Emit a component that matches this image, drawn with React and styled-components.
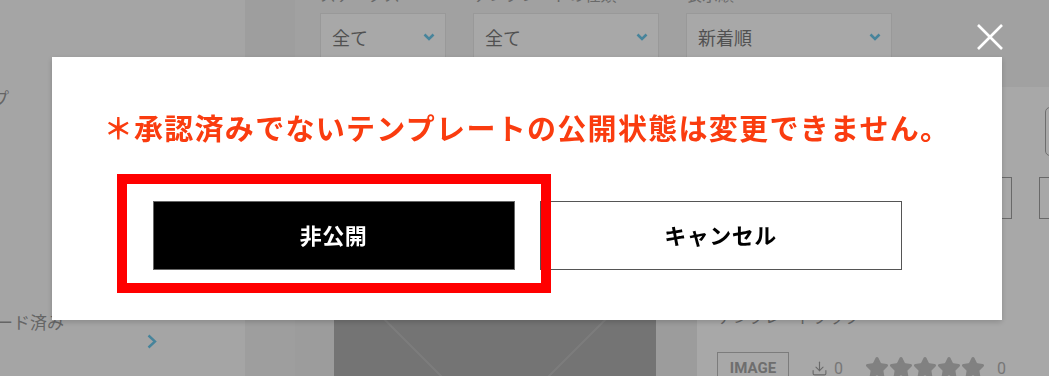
import styled, { createGlobalStyle } from 'styled-components'
import { Download, Star } from 'lucide-react'

const GlobalStyle = createGlobalStyle`
  html, body { margin: 0; padding: 0; }
  body {
    font-family: "Noto Sans CJK JP", "Noto Sans", sans-serif;
    background: #fff;
    overflow: hidden;
  }
  * { box-sizing: border-box; }
`

const Page = styled.div`
  display: flex;
  width: 1049px;
  height: 376px;
  overflow: hidden;
  background: #f5f5f5;
`

const Sidebar = styled.aside`
  flex: 0 0 345px;
  margin-left: -100px;
  padding-top: 41px;
  background: #fbfbfb;
  display: flex;
  flex-direction: column;
`

const SideRow = styled.div`
  height: 112px;
  flex: 0 0 112px;
  display: flex;
  align-items: center;
  justify-content: space-between;
  padding: 0 88px 0 ${p => p.indent}px;
  font-size: 17px;
  color: #9a9a9a;
  white-space: nowrap;
`

const RowArrow = styled.span`
  display: flex;
  margin-top: 40px;
`

const Gutter = styled.div`
  flex: 0 0 50px;
  background: #f0f0f0;
`

const Main = styled.main`
  flex: 1;
  display: flex;
  flex-direction: column;
  min-width: 0;
`

const FilterBar = styled.div`
  flex: 0 0 87px;
  display: flex;
  gap: 27px;
  padding-left: 25px;
  background: #f5f5f5;
`

const FilterGroup = styled.div`
  display: flex;
  flex-direction: column;
  width: ${p => p.w}px;
`

const FilterLabel = styled.span`
  margin-top: -16px;
  height: 20px;
  line-height: 20px;
  font-size: 16px;
  color: #a0a0a0;
  white-space: nowrap;
`

const Select = styled.div`
  margin-top: 9px;
  height: 47px;
  display: flex;
  align-items: center;
  justify-content: space-between;
  padding: 0 10px 0 11px;
  background: #fff;
  border: 1px solid #e8e8e8;
  border-bottom: none;
  font-size: 18px;
  color: #7c7c7c;
`

const Content = styled.div`
  flex: 1;
  display: flex;
  gap: 41px;
  padding-left: 39px;
  background: #ededed;
`

const ImageCard = styled.div`
  flex: 0 0 322px;
  padding-top: 182px;
`

const InfoCard = styled.div`
  flex: 0 0 400px;
  display: flex;
  flex-direction: column;
  padding: 20px 0 0 20px;
  background: #fff;
`

const SearchBox = styled.div`
  margin-left: 328px;
  height: 49px;
  border: 1px solid #a8a8a8;
  border-radius: 5px;
`

const ActionRow = styled.div`
  display: flex;
  gap: 27px;
  margin-top: 21px;
  padding-left: 195px;
`

const ActionBox = styled.div`
  flex: 0 0 100px;
  height: 42px;
  border: 1px solid #a0a0a0;
`

const CardTitle = styled.div`
  margin-top: 86px;
  line-height: 22px;
  font-size: 16px;
  color: #9a9a9a;
`

const MetaRow = styled.div`
  display: flex;
  align-items: center;
  margin-top: 25px;
  font-family: Roboto, "Noto Sans", sans-serif;
  color: #b5b5b5;
  font-size: 16px;
`

const Badge = styled.span`
  height: 32px;
  width: 72px;
  display: flex;
  align-items: center;
  justify-content: center;
  border: 1px solid #bdbdbd;
  font-weight: 700;
  font-size: 15px;
  color: #a8a8a8;
`

const Count = styled.span`
  display: flex;
  margin-left: ${p => p.gap ?? 6}px;
`

const Stars = styled.div`
  display: flex;
  margin-left: 22px;
`

const Overlay = styled.div`
  position: fixed;
  inset: 0;
  background: rgba(0, 0, 0, 0.34);
  display: flex;
  align-items: flex-start;
  padding: 57px 0 0 52px;
`

const CloseButton = styled.button`
  position: absolute;
  left: 976px;
  top: 23px;
  width: 28px;
  height: 28px;
  padding: 0;
  border: none;
  background: none;
  cursor: pointer;
`

const Modal = styled.div`
  position: relative;
  width: 950px;
  height: 263px;
  padding-top: 49px;
  background: #fff;
  box-shadow: 0 2px 6px rgba(0, 0, 0, 0.18);
  display: flex;
  flex-direction: column;
  align-items: center;
`

const Message = styled.p`
  margin: 0;
  line-height: 42px;
  font-size: 29px;
  font-weight: 700;
  letter-spacing: 1.3px;
  color: #fa3c0f;
  white-space: nowrap;
`

const Buttons = styled.div`
  display: flex;
  gap: 25px;
  margin-top: 53px;
`

const Button = styled.button`
  width: 362px;
  height: 69px;
  padding: 0 0 4px;
  border: 1px solid ${p => (p.primary ? '#666' : '#555')};
  background: ${p => (p.primary ? '#000' : '#fff')};
  color: ${p => (p.primary ? '#fff' : '#000')};
  font-family: "Noto Sans CJK JP", sans-serif;
  font-size: 22px;
  font-weight: 700;
  letter-spacing: 0.5px;
  cursor: pointer;
`

const Highlight = styled.div`
  position: absolute;
  left: 65px;
  top: 117px;
  width: 434px;
  height: 119px;
  border: 10px solid #ff0000;
  pointer-events: none;
`

const Chevron = ({ dir = 'down', color = '#6cc8ec' }) =>
  dir === 'down' ? (
    <svg width="12" height="8" viewBox="0 0 12 8">
      <polyline points="1.5,1.5 6,6 10.5,1.5" fill="none" stroke={color} strokeWidth="2.6" />
    </svg>
  ) : (
    <svg width="10" height="15" viewBox="0 0 10 15">
      <polyline points="1.5,1.5 8,7.5 1.5,13.5" fill="none" stroke={color} strokeWidth="2.4" />
    </svg>
  )

const Placeholder = () => (
  <svg width="322" height="322" viewBox="0 0 322 322">
    <rect width="322" height="322" fill="#b0b0b0" />
    <line x1="0" y1="0" x2="322" y2="322" stroke="#bdbdbd" strokeWidth="2" />
    <line x1="322" y1="0" x2="0" y2="322" stroke="#bdbdbd" strokeWidth="2" />
  </svg>
)

const filters = [
  { label: 'ステータス', value: '全て', w: 126 },
  { label: 'テンプレートの種類', value: '全て', w: 186 },
  { label: '表示順', value: '新着順', w: 206 },
]

function App() {
  return (
    <>
      <GlobalStyle />
      <Page>
        <Sidebar>
          <SideRow indent={42}>グループ</SideRow>
          <SideRow indent={42} />
          <SideRow indent={28}>
            アップロード済み
            <RowArrow><Chevron dir="right" /></RowArrow>
          </SideRow>
        </Sidebar>
        <Gutter />
        <Main>
          <FilterBar>
            {filters.map(f => (
              <FilterGroup key={f.label} w={f.w}>
                <FilterLabel>{f.label}</FilterLabel>
                <Select>
                  {f.value}
                  <Chevron />
                </Select>
              </FilterGroup>
            ))}
          </FilterBar>
          <Content>
            <ImageCard>
              <Placeholder />
            </ImageCard>
            <InfoCard>
              <SearchBox />
              <ActionRow>
                <ActionBox />
                <ActionBox />
              </ActionRow>
              <CardTitle>テンプレートブック</CardTitle>
              <MetaRow>
                <Badge>IMAGE</Badge>
                <Count gap={22}><Download size={17} strokeWidth={1.6} color="#a0a0a0" /></Count>
                <Count>0</Count>
                <Stars>
                  {[0, 1, 2, 3, 4].map(i => (
                    <Star key={i} size={24} fill="#c4c4c4" color="#c4c4c4" />
                  ))}
                </Stars>
                <Count gap={12}>0</Count>
              </MetaRow>
            </InfoCard>
          </Content>
        </Main>
      </Page>

      <Overlay>
        <CloseButton aria-label="閉じる">
          <svg width="28" height="28" viewBox="0 0 28 28">
            <path d="M2 2 L26 26 M26 2 L2 26" stroke="#fff" strokeWidth="2.6" />
          </svg>
        </CloseButton>
        <Modal>
          <Message>＊承認済みでないテンプレートの公開状態は変更できません。</Message>
          <Buttons>
            <Button primary>非公開</Button>
            <Button>キャンセル</Button>
          </Buttons>
          <Highlight />
        </Modal>
      </Overlay>
    </>
  )
}

export default App
